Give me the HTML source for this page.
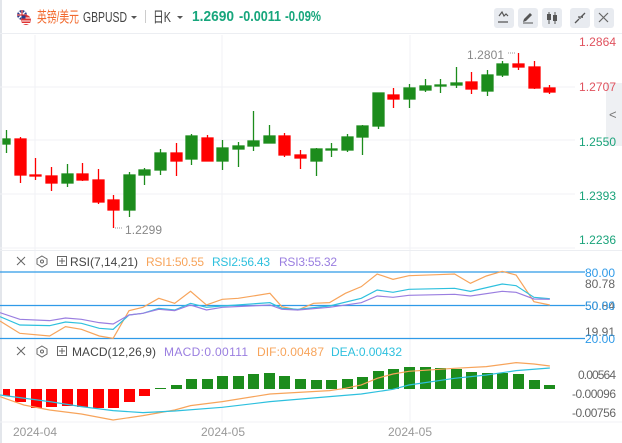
<!DOCTYPE html>
<html><head><meta charset="utf-8">
<style>
body{margin:0;width:622px;height:443px;overflow:hidden;background:#fff;font-family:"Liberation Sans","Noto Sans CJK SC",sans-serif;position:relative}
.a{position:absolute;white-space:nowrap}
.btn{position:absolute;top:8px;width:20px;height:20px;background:#e8ebf0;border-radius:3px}
</style></head><body>
<div class="a" style="left:0;top:0;width:2px;height:443px;background:#e3e6eb"></div>
<div class="a" style="left:0;top:33px;width:622px;height:1px;background:#eceef2"></div>
<div class="btn" style="left:494px"></div><div class="btn" style="left:518px"></div><div class="btn" style="left:542px"></div><div class="btn" style="left:570px"></div><div class="btn" style="left:594px"></div>
<svg class="a" style="left:0;top:0" width="622" height="35">
<g transform="translate(16,9)">
<circle cx="6" cy="6" r="5" fill="#2a3c8c"/><path d="M1 6h10M6 1v10M2.5 2.5l7 7M9.5 2.5l-7 7" stroke="#fff" stroke-width="1.5"/><path d="M1 6h10M6 1v10" stroke="#d22" stroke-width="1"/>
<circle cx="10" cy="11" r="5" fill="#d33"/><path d="M5.5 9h9M5.5 12h9M6 14.5h8" stroke="#fff" stroke-width="1"/><rect x="5.5" y="6.5" width="4" height="3" fill="#2a3c8c"/>
</g>
<g font-family="Liberation Sans, Noto Sans CJK SC, sans-serif" font-size="15">
<text x="37" y="22" fill="#f26a2e" textLength="42" lengthAdjust="spacingAndGlyphs">英镑/美元</text>
<text x="83" y="22" fill="#444" textLength="44" lengthAdjust="spacingAndGlyphs">GBPUSD</text>
<text x="153" y="22" fill="#444" textLength="18" lengthAdjust="spacingAndGlyphs">日K</text>
<text x="192" y="21" fill="#17a67c" font-weight="bold" textLength="42" lengthAdjust="spacingAndGlyphs">1.2690</text>
<text x="239" y="21" fill="#17a67c" font-weight="bold" textLength="42" lengthAdjust="spacingAndGlyphs">-0.0011</text>
<text x="285" y="21" fill="#17a67c" font-weight="bold" textLength="36" lengthAdjust="spacingAndGlyphs">-0.09%</text>
</g>
<path d="M131 16h6l-3 3z M177 16h6l-3 3z" fill="#555"/>
<path d="M145.5 10v13" stroke="#ccc"/>
<path d="M499 16l3-4 2 4 2-2 2 2M498 22h10" stroke="#555" fill="none" stroke-width="1.2"/>
<path d="M523 22l1-3 6-6 2 2-6 6z" fill="#555"/><path d="M523 23h10" stroke="#555"/>
<path d="M549 12v12M555 12v12" stroke="#555"/><rect x="547" y="14" width="4" height="6" fill="#555"/><rect x="553" y="15" width="4" height="6" fill="#555"/>
<path d="M575 23l4-4M585 13l-4 4M578 17h2v2M582 18v-1h1" stroke="#555" stroke-width="1.3" fill="none"/>
<path d="M599 13l9 9M608 13l-9 9" stroke="#666" stroke-width="1.2"/>
</svg>

<svg class="a" style="left:0;top:0" width="622" height="443">
<g stroke="#f0f2f5" stroke-width="1">
<path d="M0 87H575M0 140H575M0 194H575M0 248H575M35 35V422M222 35V422M410 35V422"/>
<path d="M0 422H622"/>
</g>
<rect x="606" y="83" width="16" height="63" fill="#eef0f3"/>
<text x="609" y="119" font-size="13" fill="#777" font-family="Liberation Sans">&lt;</text>
<g font-family="Liberation Sans" font-size="12">
<text x="579" y="46" fill="#e0525e" textLength="37">1.2864</text>
<text x="579" y="91" fill="#e0525e" textLength="37">1.2707</text>
<text x="579" y="146" fill="#1aa37a" textLength="37">1.2550</text>
<text x="579" y="200" fill="#1aa37a" textLength="37">1.2393</text>
<text x="579" y="244" fill="#1aa37a" textLength="37">1.2236</text>
<text x="125" y="234" fill="#888" textLength="37">1.2299</text>
<text x="467" y="59" fill="#888" textLength="37">1.2801</text>
</g>
<path d="M115 228h8M508 53h8" stroke="#999" stroke-dasharray="1 1"/>
<g stroke-width="1.3">
<g fill="#1c8c1c" stroke="#1c8c1c">
<path d="M6.5 130V153M67.5 164V187M129.5 172V217M144.5 168V185M160.5 149V175M191.5 134V165M222.5 140V170M238.5 142V167M253.5 111V151M269.5 125V143M316.5 148V176M331.5 143V157M347.5 134V152M362.5 125V155M378.5 93V129M409.5 84V108M425.5 79V92M440.5 79V93M456.5 67V88M487.5 70V96M502.5 61V77"/>
<rect x="3" y="139" width="7" height="5"/><rect x="62" y="174" width="11" height="9"/><rect x="124" y="175" width="11" height="35"/><rect x="139" y="170" width="11" height="5"/><rect x="155" y="153" width="11" height="17"/><rect x="186" y="136" width="11" height="23"/><rect x="217" y="148" width="11" height="13"/><rect x="233" y="146" width="11" height="3"/><rect x="248" y="141" width="11" height="5"/><rect x="264" y="136" width="11" height="7"/><rect x="311" y="149" width="11" height="12"/><rect x="326" y="149" width="11" height="1"/><rect x="342" y="137" width="11" height="13"/><rect x="357" y="126" width="11" height="11"/><rect x="373" y="93" width="11" height="33"/><rect x="404" y="88" width="11" height="11"/><rect x="420" y="86" width="11" height="4"/><rect x="435" y="85" width="11" height="1"/><rect x="451" y="83" width="11" height="2"/><rect x="482" y="75" width="11" height="16"/><rect x="497" y="64" width="11" height="11"/>
</g>
<g fill="#f00" stroke="#f00">
<path d="M20.5 137V183M35.5 158V180M51.5 167V191M82.5 163V181M98.5 169V204M113.5 195V228M176.5 143V176M207.5 135V161M284.5 133V157M300.5 150V169M393.5 88V108M471.5 72V94M518.5 53V70M534.5 61V89M549.5 85V94"/>
<rect x="15" y="139" width="11" height="36"/><rect x="30" y="175" width="11" height="1"/><rect x="46" y="176" width="11" height="7"/><rect x="77" y="174" width="11" height="6"/><rect x="93" y="180" width="11" height="22"/><rect x="108" y="200" width="11" height="10"/><rect x="171" y="153" width="11" height="8"/><rect x="202" y="138" width="11" height="23"/><rect x="279" y="136" width="11" height="19"/><rect x="295" y="155" width="11" height="3"/><rect x="388" y="95" width="11" height="4"/><rect x="466" y="82" width="11" height="7"/><rect x="513" y="64" width="11" height="3"/><rect x="529" y="67" width="11" height="21"/><rect x="544" y="88" width="11" height="4"/>
</g>
</g>

<rect x="0" y="250" width="622" height="1" fill="#eceef2"/>
<path d="M0 272H585M0 305.5H585M0 338.5H585" stroke="#2f9ae8" stroke-width="1.3"/>
<g font-family="Liberation Sans" font-size="12">
<text x="585" y="277" fill="#2f9ae8" textLength="30">80.00</text>
<text x="585" y="288" fill="#666" textLength="30">80.78</text>
<text x="585" y="310" fill="#666" textLength="30">50.84</text>
<text x="585" y="310" fill="#2f9ae8" textLength="30">50.00</text>
<text x="585" y="336" fill="#666" textLength="30">19.91</text>
<text x="585" y="343" fill="#2f9ae8" textLength="30">20.00</text>
<text x="578" y="379" fill="#666" textLength="38">0.00564</text>
<text x="572" y="398" fill="#666" textLength="44">-0.00096</text>
<text x="572" y="417" fill="#666" textLength="44">-0.00756</text>
<text x="13" y="436" fill="#999" textLength="44">2024-04</text>
<text x="201" y="436" fill="#999" textLength="44">2024-05</text>
<text x="388" y="436" fill="#999" textLength="44">2024-05</text>
</g>
<g transform="translate(0,250) scale(0.397,0.3333)" fill="none" stroke-width="1.2">
<polyline vector-effect="non-scaling-stroke" stroke="#f7a45b" points="0,213 50,250 125,258 165,230 205,238 250,258 285,265 325,182 360,172 400,145 440,160 480,124 520,165 560,148 600,145 680,130 710,170 750,180 790,160 830,158 870,130 910,110 950,72 990,88 1030,77 1100,74 1145,72 1185,100 1225,78 1265,64 1300,75 1345,155 1385,165"/>
<polyline vector-effect="non-scaling-stroke" stroke="#2ec0de" points="0,200 50,225 125,227 165,216 205,220 250,235 285,238 325,195 360,190 400,175 440,180 480,160 520,172 560,168 680,158 710,175 750,178 830,168 910,145 950,120 990,127 1030,118 1145,115 1185,124 1265,102 1300,107 1345,142 1385,146"/>
<polyline vector-effect="non-scaling-stroke" stroke="#9a7ee0" points="0,188 50,208 125,212 165,204 205,208 250,218 285,222 325,195 360,190 400,178 440,182 480,165 520,180 560,172 680,165 710,178 750,180 830,172 910,158 950,138 990,142 1030,136 1145,133 1185,138 1265,124 1300,127 1345,147 1385,148"/>
</g>
<g fill="#f00">
<rect x="3" y="389" width="7" height="7"/><rect x="15" y="389" width="11" height="13"/><rect x="31" y="389" width="11" height="19"/><rect x="46" y="389" width="11" height="18"/><rect x="62" y="389" width="11" height="17"/><rect x="77" y="389" width="11" height="18"/><rect x="93" y="389" width="11" height="19"/><rect x="108" y="389" width="11" height="19"/><rect x="124" y="389" width="11" height="13"/><rect x="139" y="389" width="11" height="7"/>
</g>
<g fill="#1c8c1c">
<rect x="155" y="388" width="11" height="1"/><rect x="171" y="385" width="11" height="4"/><rect x="186" y="379" width="11" height="10"/><rect x="202" y="379" width="11" height="10"/><rect x="217" y="376" width="11" height="13"/><rect x="233" y="376" width="11" height="13"/><rect x="248" y="374" width="11" height="15"/><rect x="264" y="373" width="11" height="16"/><rect x="279" y="376" width="11" height="13"/><rect x="295" y="379" width="11" height="10"/><rect x="311" y="380" width="11" height="9"/><rect x="326" y="380" width="11" height="9"/><rect x="342" y="379" width="11" height="10"/><rect x="357" y="377" width="11" height="12"/><rect x="373" y="371" width="11" height="18"/><rect x="388" y="369" width="11" height="20"/><rect x="404" y="367" width="11" height="22"/><rect x="420" y="367" width="11" height="22"/><rect x="435" y="368" width="11" height="21"/><rect x="451" y="369" width="11" height="20"/><rect x="466" y="372" width="11" height="17"/><rect x="482" y="373" width="11" height="16"/><rect x="497" y="373" width="11" height="16"/><rect x="513" y="374" width="11" height="15"/><rect x="529" y="380" width="11" height="9"/><rect x="544" y="385" width="11" height="4"/>
</g>
<g transform="translate(0,250) scale(0.397,0.3333)" fill="none">
<polyline vector-effect="non-scaling-stroke" stroke="#f7a45b" stroke-width="1.2" points="0,440 60,465 125,480 205,492 285,510 360,497 440,480 480,467 560,455 680,432 830,422 870,415 910,405 950,385 990,372 1030,364 1145,355 1225,350 1300,338 1345,342 1385,348"/>
<polyline vector-effect="non-scaling-stroke" stroke="#2ec0de" stroke-width="1.2" points="0,435 125,455 205,470 285,482 360,488 440,483 560,472 680,455 830,440 910,432 990,418 1030,405 1145,385 1225,375 1300,362 1385,354"/>
</g>
<g stroke="#666" stroke-width="1" fill="none">
<path d="M17 257l8 8M25 257l-8 8M17 347l8 8M25 347l-8 8"/>
<path d="M42 256l5 3v5l-5 3-5-3v-5z M42 346l5 3v5l-5 3-5-3v-5z"/><circle cx="42" cy="261.5" r="1.5"/><circle cx="42" cy="351.5" r="1.5"/>
<rect x="57.5" y="256.5" width="9" height="9"/><rect x="57.5" y="346.5" width="9" height="9"/>
<path d="M62 258v6M59 261h6M62 348v6M59 351h6"/>
</g>
<g font-family="Liberation Sans" font-size="12">
<text x="70" y="266" fill="#444" textLength="68">RSI(7,14,21)</text>
<text x="146" y="266" fill="#f7a45b" textLength="58">RSI1:50.55</text>
<text x="212" y="266" fill="#2ec0de" textLength="58">RSI2:56.43</text>
<text x="279" y="266" fill="#9a7ee0" textLength="58">RSI3:55.32</text>
<text x="72" y="356" fill="#444" textLength="84">MACD(12,26,9)</text>
<text x="164" y="356" fill="#9a7ee0" textLength="84">MACD:0.00111</text>
<text x="257" y="356" fill="#f7a45b" textLength="67">DIF:0.00487</text>
<text x="331" y="356" fill="#2ec0de" textLength="71">DEA:0.00432</text>
</g>
</svg>
</body></html>
